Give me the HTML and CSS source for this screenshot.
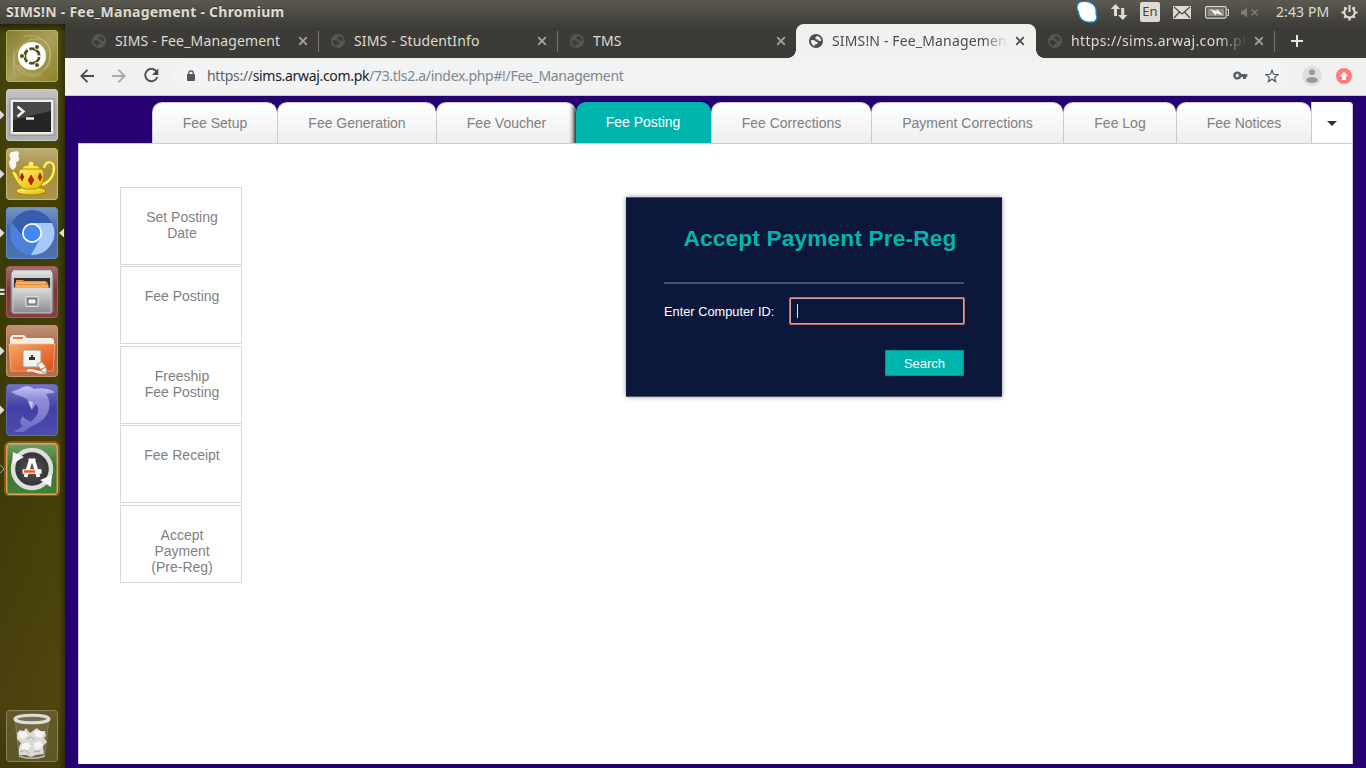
FILE: index.html
```html
<!DOCTYPE html>
<html lang="en">
<head>
<meta charset="utf-8">
<title>SIMS!N - Fee_Management</title>
<link rel="stylesheet" href="styles.css">
</head>
<body>
<svg width="0" height="0" class="defs">
  <defs>
    <symbol id="globe" viewBox="0 0 14 14"><circle cx="7" cy="7" r="7" fill="currentColor"/><path d="M1.800 6.500C3 5.600 5.500 5.900 6.300 7.300L8.800 8.200 8.300 9.900 6.200 10.300 5.400 12.200C3.500 11.800 2 9.500 1.800 6.500ZM8.500 1.900 6.300 3.300 6.700 5.200 8.400 5.300 9.300 6.700 12.200 6.900C12.200 4.500 10.700 2.500 8.500 1.900Z" fill="var(--cut)"/></symbol>
    <symbol id="close" viewBox="0 0 10 10"><path d="M1.200 1.200 8.800 8.800M8.800 1.200 1.200 8.800" stroke="currentColor" stroke-width="1.700"/></symbol>
    <linearGradient id="shine" x2="0" y2="1"><stop offset="0" stop-color="#fff" stop-opacity=".3"/><stop offset=".45" stop-color="#fff" stop-opacity=".02"/><stop offset="1" stop-color="#fff" stop-opacity=".08"/></linearGradient>
    <linearGradient id="metal" x2="0" y2="1"><stop offset="0" stop-color="#ddd"/><stop offset="1" stop-color="#8b8b8b"/></linearGradient>
    <linearGradient id="olive" x2="1" y2="1"><stop offset="0" stop-color="#837d2c"/><stop offset=".5" stop-color="#aaa05a"/><stop offset="1" stop-color="#8b8325"/></linearGradient>
    <linearGradient id="gold" x2="1" y2="1"><stop offset="0" stop-color="#fff67a"/><stop offset="1" stop-color="#e2b900"/></linearGradient>
    <linearGradient id="orange" x2="1" y2="1"><stop offset="0" stop-color="#f5a969"/><stop offset="1" stop-color="#e1480f"/></linearGradient>
    <linearGradient id="dolphin" x2="0" y2="1"><stop offset="0" stop-color="#c3c2f4"/><stop offset=".3" stop-color="#8f8cda"/><stop offset="1" stop-color="#6f6cc4"/></linearGradient>
    <radialGradient id="dark"><stop offset="0" stop-color="#555"/><stop offset="1" stop-color="#303030"/></radialGradient>
  </defs>
</svg>

<header class="menubar">
  <span class="window-title">SIMS!N - Fee_Management - Chromium</span>
  <div class="indicators">
    <svg width="22" height="22" viewBox="0 0 22 22"><path d="M3 1.500C7-.5 13 .2 16 2.500 20 5 20.500 10 20 13 22.500 18 19 22 15 21 8 22 3 18 2.500 11 .5 8 .5 4 3 1.500Z" fill="#fff" stroke="#1589c9" stroke-width="1.300"/></svg>
    <svg class="i-net" width="18" height="18" viewBox="0 0 18 18"><path d="M5.500 1 10.200 6H7V13H4V6H.8ZM12.700 17 8 12H11.200V5H14.200V12H17.400Z" fill="#dfdbd2"/></svg>
    <span class="lang">En</span>
    <svg class="i-mail" width="18" height="13" viewBox="0 0 18 13"><path fill="#dfdbd2" d="M0 0H18V13H0Z"/><path d="M1 1 9 8 17 1M1 12 6.500 6M17 12 11.500 6" stroke="#4b4942" stroke-width="1.300" fill="none"/></svg>
    <svg class="i-bat" width="24" height="13" viewBox="0 0 24 13"><rect x=".6" y=".6" width="20.500" height="11.500" rx="1.500" fill="none" stroke="#dfdbd2" stroke-width="1.200"/><path d="M22 3.500H23.500V9.500H22" fill="none" stroke="#dfdbd2"/><rect x="2.500" y="2.500" width="16.700" height="7.700" fill="#8e8b83"/><path d="M5 3 11.500 5 12 3 18.500 9.500 11.500 7.600 10.500 9.500Z" fill="#f5f2ea"/></svg>
    <svg class="i-vol" width="18" height="13" viewBox="0 0 18 13"><path d="M0 4.500H2.500L6 1.500V11.500L2.500 8.500H0Z" fill="#7f7d76"/><path d="m10.500 3.500 6 6M16.500 3.500l-6 6" stroke="#7f7d76" stroke-width="1.400"/></svg>
    <span class="clock">2:43 PM</span>
    <svg class="i-gear" width="17" height="17" viewBox="0 0 17 17" fill="none" stroke="#dfdbd2"><path d="M5.800 3.900A5.200 5.200 0 1 0 11.200 3.900" stroke-width="2"/><path d="M8.500 1V8" stroke-width="2"/><path d="M3.200 3.200 4.800 4.800M13.800 3.200 12.200 4.800M.5 8.500H3M14 8.500H16.500M3.200 13.800 4.800 12.200M13.800 13.800 12.200 12.200M8.500 14V16.500" stroke-width="2.200"/></svg>
  </div>
</header>

<div class="desktop">
  <nav class="launcher">
    <svg class="tile" viewBox="0 0 65 59"><g transform="translate(6 6)"><rect width="52" height="52" rx="4" fill="url(#olive)"/><path d="M9 44C3 25 15 7 34 9 46 12 47 28 39 39M17 7C35 1 49 17 43 34 35 48 18 47 13 35M8 20C5 38 18 50 36 45" fill="none" stroke="#d3cea0" stroke-opacity=".5"/><circle cx="26" cy="26" r="14" fill="#fff"/><circle cx="26" cy="26" r="7.300" fill="none" stroke="#555018" stroke-width="2.800" stroke-dasharray="13.300 2" stroke-dashoffset="-1"/><g fill="#555018" stroke="#fff"><circle cx="16" cy="26" r="2.500"/><circle cx="31" cy="17" r="2.500"/><circle cx="31" cy="35" r="2.500"/></g><rect x=".5" y=".5" width="51" height="51" rx="3.500" fill="none" stroke="#c6c178" stroke-opacity=".6"/></g></svg>

    <svg class="tile" viewBox="0 0 65 59"><path d="M0 27.500 4.500 32 0 36.500Z" fill="#ddd"/><g transform="translate(6 6)"><rect width="52" height="52" rx="4" fill="#aaa"/><rect x=".5" y=".5" width="51" height="51" rx="3.500" fill="url(#shine)" stroke="#ccc"/><rect x="4" y="10" width="44" height="36" fill="#eee" stroke="#888"/><rect x="7" y="13" width="38" height="30" fill="#252525"/><path d="M7 13H45V22L7 31Z" fill="#666" opacity=".55"/><path d="m11.500 17.500 6 5-6 5M20 29.500H28" fill="none" stroke="#eee" stroke-width="2.500"/></g></svg>

    <svg class="tile" viewBox="0 0 65 59"><path d="M0 27.500 4.500 32 0 36.500Z" fill="#ddd"/><g transform="translate(6 6)"><rect width="52" height="52" rx="4" fill="#a28b3b"/><rect x=".5" y=".5" width="51" height="51" rx="3.500" fill="url(#shine)" stroke="#c7b975"/><path d="M38 20C40 12 48 13 48 20 48 28 43 34 36 37" fill="none" stroke="#cda500" stroke-width="3.500"/><path d="M38 20C40 12 48 13 48 20 48 28 43 34 36 37" fill="none" stroke="#fff578" stroke-width="2"/><ellipse cx="25" cy="43" rx="15" ry="4" fill="url(#gold)" stroke="#a37d00"/><path d="M6 23C10 23 12 27 13 31L13 22C18 19 32 19 37 22 40 32 35 39 30 41H19C13 39 9 31 6 25Z" fill="url(#gold)" stroke="#bb8e00"/><path d="M16 21C17 17 21 17 25 17 29 17 33 17 34 21Z" fill="#ffe63e" stroke="#b98f00"/><circle cx="25" cy="16" r="2.500" fill="#ffee65"/><path d="m16 25 2 4-2 4-2-4ZM25 27l3 5-3 5-3-5ZM34 25l2 4-2 4-2-4Z" fill="#c91b16" stroke="#7f1510" stroke-width=".5"/><path d="M6 22C3 18 2 13 5 11 2 8 4 3 8 4 11 1 15 5 12 8 15 11 12 14 10 14 11 18 9 22 6 22Z" fill="#fff" opacity=".92"/></g></svg>

    <svg class="tile" viewBox="0 0 65 59"><path d="M0 27.500 4.500 32 0 36.500ZM64 27.500 59 32 64 36.500Z" fill="#ddd"/><g transform="translate(6 6)"><rect width="52" height="52" rx="4" fill="#3f66aa"/><rect x=".5" y=".5" width="51" height="51" rx="3.500" fill="url(#shine)" stroke="#648acb"/><circle cx="26" cy="26" r="22" fill="#4a82d9"/><path d="M6 16A22 22 0 0 1 46 16H26L16 28Z" fill="#375eae"/><path d="M46 16A22 22 0 0 1 25 48L35 30C36 25 34 18 26 16Z" fill="#a9c8fa"/><circle cx="26" cy="26" r="10" fill="#fff"/><circle cx="26" cy="26" r="8.300" fill="#4387f4"/></g></svg>

    <svg class="tile" viewBox="0 0 65 59"><path d="M0 29.800H4.500M0 33.800H4.500" stroke="#ddd" stroke-width="2.300"/><g transform="translate(6 6)"><rect width="52" height="52" rx="4" fill="#7b3038"/><rect x=".5" y=".5" width="51" height="51" rx="3.500" fill="url(#shine)" stroke="#a35c61"/><path d="M7 4H45L47 8V46H5V8Z" fill="url(#metal)" stroke="#777"/><path d="M5.500 8 7.500 4.500H44.500L46.500 8Z" fill="#ddd"/><rect x="8" y="12" width="36" height="10" fill="#303030"/><path d="M10 14H17L18 15H40V18H42V24H9V17H10Z" fill="#f08b3a"/><path d="M10 17H42M10 20H43" stroke="#ffd18a"/><path d="M7 22H45V47H7Z" fill="url(#metal)" stroke="#ccc"/><rect x="19.500" y="30.500" width="13" height="10" rx="1" fill="#aaa" stroke="#ddd"/><rect x="22" y="33" width="8" height="5" fill="#fff" stroke="#555"/></g></svg>

    <svg class="tile" viewBox="0 0 65 59"><path d="M0 27.500 4.500 32 0 36.500Z" fill="#ddd"/><g transform="translate(6 6)"><rect width="52" height="52" rx="4" fill="#a76442"/><rect x=".5" y=".5" width="51" height="51" rx="3.500" fill="url(#shine)" stroke="#cc9274"/><path d="M4 13 6 10H18L21 13H46L48 15V22H4Z" fill="#f4eee5"/><path d="M7 13H17" stroke="#f07b36" stroke-width="2"/><path d="M3 19H49L47 46H5Z" fill="url(#orange)" stroke="#ffbd87" stroke-width=".7"/><rect x="17" y="25" width="18" height="17" rx="1" fill="#f5f2e9" stroke="#999"/><path d="M23 35V32H25V30H27V32H29V35Z" fill="#333"/><path d="M21 46C27 43 33 50 40 47" fill="none" stroke="#eee7de" stroke-width="2.500"/><path d="m31 39 5-2 4 5-5 3ZM35 44l5-2 1 4-4 2Z" fill="#f4f0e8" stroke="#91867d" stroke-width=".7"/></g></svg>

    <svg class="tile" viewBox="0 0 65 59"><path d="M0 27.500 4.500 32 0 36.500Z" fill="#ddd"/><g transform="translate(6 6)"><rect width="52" height="52" rx="4" fill="#3e3ca4"/><rect x=".5" y=".5" width="51" height="51" rx="3.500" fill="url(#shine)" stroke="#6664ba"/><path d="M5 8C9 6 12 6 15 4 20 1 25 2 28 5 36 3 44 5 49 8 46 10 43 9 40 10 47 20 43 32 34 38 28 42 22 43 18 48L8 48C11 46 14 44 17 42 13 40 14 35 17 32 18 36 22 35 24 38 31 34 35 26 30 20L26 26C23 23 23 19 22 16 17 12 11 12 5 8Z" fill="url(#dolphin)"/><path d="m22 17 4 8 1-7Z" fill="#c8c6f3"/></g></svg>

    <svg class="tile" viewBox="0 0 65 59"><path d="M0 27.500 4 32 0 36.500" fill="none" stroke="#79b6d0"/><g transform="translate(6 6)"><rect x="-1" y="-1" width="54" height="54" rx="5" fill="none" stroke="#d6741f" stroke-opacity=".5" stroke-width="2"/><rect width="52" height="52" rx="4" fill="#337326"/><rect x=".7" y=".7" width="50.600" height="50.600" rx="3.500" fill="url(#shine)" stroke="#e0a45e" stroke-width="1.400"/><circle cx="26" cy="26" r="19" fill="url(#dark)" stroke="#ddd" stroke-width="4.500"/><path d="m6 21 1-12 11 5ZM46 32 34 37 45 44Z" fill="#f5f5f5"/><path d="M24.500 18 19.500 34M27.500 18 32.500 34M22.500 17.500H29.500" fill="none" stroke="#fff" stroke-width="3.800"/><path d="M16.500 28.500H35.500" stroke="#fff" stroke-width="4.500"/><path d="M18 28.500H29" stroke="#ef5a16" stroke-width="2.500"/></g></svg>

    <svg class="tile trash" viewBox="0 0 65 59"><g transform="translate(6 6)"><rect x=".5" y=".5" width="51" height="51" rx="3.500" fill="#777044" fill-opacity=".5" stroke="#88825c"/><path d="M9 9 13 45C19 49 34 49 39 45L43 9Z" fill="#8b876b" fill-opacity=".35" stroke="#aaa58c" stroke-opacity=".4"/><path d="M11 23 14 20 18 21 20 18 24 23 28 20 31 18 34 21 39 21 40 26 38 28 41 32 37 36 38 44 30 45 25 47 20 45 13 45 13 37 15 33 11 29Z" fill="#d9d9d5"/><g fill="#f4f4f2"><path d="m13 22 6-1 3 4-4 4-5-2ZM28 21l5-1 5 3-3 5-6-2ZM16 34l6-2 3 4-4 5-6-2ZM28 33l6-2 3 5-5 4-4-2Z"/></g><path d="m21 29 4-2 4 3M14 42l5-2 4 3M28 42l6-1" fill="none" stroke="#a6a69d"/><ellipse cx="26" cy="9" rx="17" ry="3.800" fill="#74704f" stroke="#ddd" stroke-width="3"/><path d="M13 46C20 49 32 49 39 46" fill="none" stroke="#bbb" stroke-width="1.500"/></g></svg>
  </nav>

  <main class="browser">
    <div class="tabstrip">
      <div class="tab"><svg class="fav"><use href="#globe"/></svg><span class="label">SIMS - Fee_Management</span><svg class="x"><use href="#close"/></svg></div>
      <div class="tab"><svg class="fav"><use href="#globe"/></svg><span class="label">SIMS - StudentInfo</span><svg class="x"><use href="#close"/></svg></div>
      <div class="tab no-sep"><svg class="fav"><use href="#globe"/></svg><span class="label">TMS</span><svg class="x"><use href="#close"/></svg></div>
      <div class="tab active"><svg class="fav"><use href="#globe"/></svg><span class="label">SIMS!N - Fee_Management</span><svg class="x"><use href="#close"/></svg></div>
      <div class="tab"><svg class="fav"><use href="#globe"/></svg><span class="label link">https://sims.arwaj.com.pk</span><svg class="x"><use href="#close"/></svg></div>
      <svg class="plus" viewBox="0 0 12 12"><path d="M6 0V12M0 6H12" stroke="#e8e5dc" stroke-width="2"/></svg>
    </div>

    <div class="toolbar">
      <svg class="back" width="14" height="14" viewBox="0 0 14 14" fill="none" stroke="#4b4b4b" stroke-width="1.800"><path d="M14 7H1.500M7.500.8 1.300 7 7.500 13.200"/></svg>
      <svg class="fwd" width="14" height="14" viewBox="0 0 14 14" fill="none" stroke="#a9a9a9" stroke-width="1.800"><path d="M0 7H12.500M6.500.8 12.700 7 6.500 13.200"/></svg>
      <svg class="reload" width="15" height="15" viewBox="0 0 15 15"><path d="M12.500 3.500A6.200 6.200 0 1 0 13.300 9" fill="none" stroke="#4b4b4b" stroke-width="1.900"/><path d="M14.300.5V7H8Z" fill="#4b4b4b"/></svg>
      <div class="omnibox">
        <svg width="8" height="11" viewBox="0 0 8 11"><rect y="4" width="8" height="7" rx=".8" fill="#54585c"/><path d="M1.800 4.500V3A2.200 2.200 0 0 1 6.200 3V4.500" fill="none" stroke="#54585c" stroke-width="1.300"/></svg>
        <span class="url"><span class="scheme">https://</span><span class="host">sims.arwaj.com.pk</span><span class="path">/73.tls2.a/index.php#!/Fee_Management</span></span>
        <svg class="key" width="15" height="9" viewBox="0 0 15 9"><circle cx="4.300" cy="4.500" r="2.900" fill="none" stroke="#5a5e62" stroke-width="2.400"/><path d="M7 3H14.300V6H13V8H10V6H7Z" fill="#5a5e62"/></svg>
        <svg class="star" width="14" height="14" viewBox="0 0 14 14"><path d="m7 1.300 1.600 4 4.300.3L9.600 8.400l1.100 4.200L7 10.300 3.300 12.600 4.400 8.400 1.100 5.600 5.400 5.300Z" fill="none" stroke="#55595d" stroke-width="1.200"/></svg>
      </div>
      <svg class="avatar" width="20" height="20" viewBox="0 0 20 20"><circle cx="10" cy="10" r="10" fill="#dedede"/><circle cx="10" cy="6.300" r="3" fill="#999"/><ellipse cx="10" cy="14" rx="6" ry="3" fill="#999"/></svg>
      <svg class="update" width="16" height="16" viewBox="0 0 16 16"><circle cx="8" cy="8" r="8" fill="#ff7b7b"/><path d="m8 3.800 4.300 4.500H10V12H6V8.300H3.700Z" fill="#fff"/></svg>
    </div>

    <section class="page">
      <nav class="page-tabs">
        <a class="w1">Fee Setup</a><a class="w2">Fee Generation</a><a class="w3">Fee Voucher</a><a class="w4 selected">Fee Posting</a><a class="w5">Fee Corrections</a><a class="w6">Payment Corrections</a><a class="w7">Fee Log</a><a class="w8">Fee Notices</a><span class="more"><i></i></span>
      </nav>
      <div class="panel">
        <div class="side">
          <a>Set Posting<br>Date</a><a>Fee Posting</a><a>Freeship<br>Fee Posting</a><a>Fee Receipt</a><a>Accept<br>Payment<br>(Pre-Reg)</a>
        </div>
        <div class="card">
          <h1>Accept Payment Pre-Reg</h1>
          <div class="field"><label>Enter Computer ID:</label><div class="input"><i></i></div></div>
          <div class="button">Search</div>
        </div>
      </div>
    </section>
  </main>
</div>
</body>
</html>
```
FILE: styles.css
```css
* { box-sizing: border-box; }
body { margin: 0; width: 1366px; height: 768px; overflow: hidden; display: flex; flex-direction: column; font-family: "Noto Sans", "Open Sans", sans-serif; }
svg { display: block; flex: none; }
.defs { position: absolute; }

.menubar { height: 24px; flex: none; display: flex; align-items: center; justify-content: space-between; padding: 0 8px 0 6px; background: linear-gradient(#5b594f, #403f3a); color: #dfdbd2; }
.window-title { font-weight: 700; font-size: 14px; line-height: 20px; letter-spacing: .25px; white-space: nowrap; text-shadow: 0 -1px #33322e; }
.indicators { display: flex; align-items: center; }
.i-net { margin-left: 12px; }
.lang { width: 20px; height: 20px; margin-left: 12px; border-radius: 2px; background: #dfdbd2; color: #45433d; font-size: 13px; line-height: 19px; text-align: center; }
.i-mail { margin-left: 13px; }
.i-bat { margin-left: 14px; }
.i-vol { margin-left: 12px; }
.clock { width: 54px; margin: 0 11px 0 17px; font-size: 14px; line-height: 20px; letter-spacing: .1px; white-space: nowrap; }

.desktop { flex: 1; min-height: 0; display: flex; }
.launcher { width: 65px; flex: none; display: flex; flex-direction: column; background: linear-gradient(90deg, rgba(0,0,0,.08), rgba(80,70,0,.08) 90%, rgba(0,0,0,.3)), linear-gradient(#292808, #4b4a0d 10px, #404006 220px, #454009 480px, #514610 680px, #463d0b); }
.tile { width: 65px; height: 59px; }
.trash { margin-top: auto; margin-bottom: 5px; }
.browser { flex: 1; min-width: 0; display: flex; flex-direction: column; }

.tabstrip { height: 34px; flex: none; display: flex; align-items: flex-start; padding-left: 15px; background: linear-gradient(#403f3a, #3c3b37 5px); }
.tab { --cut: #3c3b37; width: 239px; height: 34px; flex: none; display: flex; align-items: center; padding: 0 11px 0 12px; color: #a9a69d; position: relative; }
.tab::after { content: ""; position: absolute; right: 0; top: 7px; width: 1px; height: 21px; background: #77756e; }
.tab.no-sep::after, .tab.active::after { display: none; }
.fav { width: 14px; height: 14px; color: #565656; }
.label { flex: 1; margin: 0 7px 0 9px; font-size: 14px; line-height: 20px; color: #dfdbd2; overflow: hidden; white-space: nowrap; letter-spacing: .15px; }
.link { letter-spacing: .35px; mask-image: linear-gradient(90deg, #000 84%, transparent); }
.x { width: 10px; height: 10px; }
.tab.active { --cut: #f2f1ef; width: 240px; margin-left: -1px; padding-left: 13px; background: #f2f1ef; border-radius: 8px 8px 0 0; color: #4c4c4c; }
.tab.active .fav { color: #4c4c4c; }
.tab.active .label { color: #4c4c4c; mask-image: linear-gradient(90deg, #000 86%, transparent); }
.tab.active::before { content: ""; position: absolute; left: -8px; right: -8px; bottom: 0; height: 8px; background: radial-gradient(circle at 0 0, transparent 7.500px, #f2f1ef 8px) left / 8px 8px no-repeat, radial-gradient(circle at 100% 0, transparent 7.500px, #f2f1ef 8px) right / 8px 8px no-repeat; }
.plus { width: 12px; height: 12px; margin: 11px 0 0 16px; }

.toolbar { height: 38px; flex: none; display: flex; align-items: center; padding: 0 14px 2px 15px; background: #f2f1ef; border-bottom: 1px solid #ccc9c5; }
.fwd { margin-left: 18px; }
.reload { margin-left: 18px; }
.omnibox { flex: 1; height: 28px; margin-left: 14px; border-radius: 14px; background: #f1f3f5; display: flex; align-items: center; padding: 0 10px 0 14px; }
.url { margin-left: 12px; font-size: 14px; letter-spacing: -.32px; white-space: nowrap; }
.scheme { color: #5f6368; }
.host { color: #202124; }
.path { color: #80868b; }
.key { margin-left: auto; }
.star { margin-left: 17px; }
.avatar { margin-left: 13px; }
.update { margin-left: 14px; }

.page { flex: 1; min-height: 0; display: flex; flex-direction: column; padding: 6px 13px 4px; background: #240070; font-family: "Liberation Sans", Arial, sans-serif; font-size: 14px; color: #808080; }
.page-tabs { height: 41px; flex: none; display: flex; padding-left: 74px; }
.page-tabs a { height: 41px; flex: none; border: solid #ccc; border-width: 1px 0 0 1px; border-radius: 10px 10px 0 0; background: linear-gradient(#fff, #eee); line-height: 41px; text-align: center; white-space: nowrap; }
.page-tabs .w1 { width: 125px; }
.page-tabs .w2 { width: 159px; }
.page-tabs .w3 { width: 140px; background: linear-gradient(90deg, transparent 132px, rgba(60,60,60,.25) 135px, #333 139px), linear-gradient(#fff, #eee); }
.page-tabs .w4 { width: 135px; }
.page-tabs .w5 { width: 160px; }
.page-tabs .w6 { width: 192px; }
.page-tabs .w7 { width: 113px; }
.page-tabs .w8 { width: 135px; }
.page-tabs .selected { background: #00b5ad; border-color: #00b5ad; color: #fff; line-height: 39px; padding-right: 2px; }
.more { flex: 1; display: flex; align-items: center; justify-content: center; background: #fff; border-left: 1px solid #ccc; border-right: 1px solid #ccc; border-radius: 0 4px 0 0; }
.more i { border: solid transparent; border-width: 5px 5px 0; border-top-color: #333; margin-top: 2px; }
.panel { flex: 1; min-height: 0; display: flex; align-items: flex-start; background: #fff; border: solid #ccc; border-width: 1px 1px 0; padding: 43px 0 0 41px; }
.side { width: 122px; display: flex; flex-direction: column; gap: 1.470px; }
.side a { height: 78px; padding: 21px 0 0 2px; border: 1px solid #d8d8d8; line-height: 16px; text-align: center; color: #808080; }
.card { width: 376px; height: 200px; margin: 10px 0 0 384px; padding: 0 38px; background: #0b183b; border: solid #53596e; border-width: 1px 0; box-shadow: 0 0 5px rgba(0,0,0,.4); display: flex; flex-direction: column; color: #fff; font-size: 13px; }
.card h1 { margin: 0; width: 300px; height: 86px; padding: 27px 0 0 12px; border-bottom: 2px solid #4b5164; font-size: 22.750px; letter-spacing: .12px; line-height: 27px; text-align: center; white-space: nowrap; color: #00b5ad; }
.field { display: flex; align-items: center; justify-content: space-between; margin: 13px -1px 0 0; }
.field label { font-size: 12.8px; }
.input { width: 176px; height: 28px; border: 2px solid #b96f66; border-radius: 2px; outline: 1px solid #d9a39a; outline-offset: -2px; display: flex; align-items: center; padding-left: 6px; }
.input i { width: 1px; height: 14px; background: #e4e4e4; }
.button { align-self: flex-end; width: 79px; height: 26px; margin-top: 25px; background: #00b5ad; border: 1px solid #078c90; line-height: 25px; text-align: center; }
```
